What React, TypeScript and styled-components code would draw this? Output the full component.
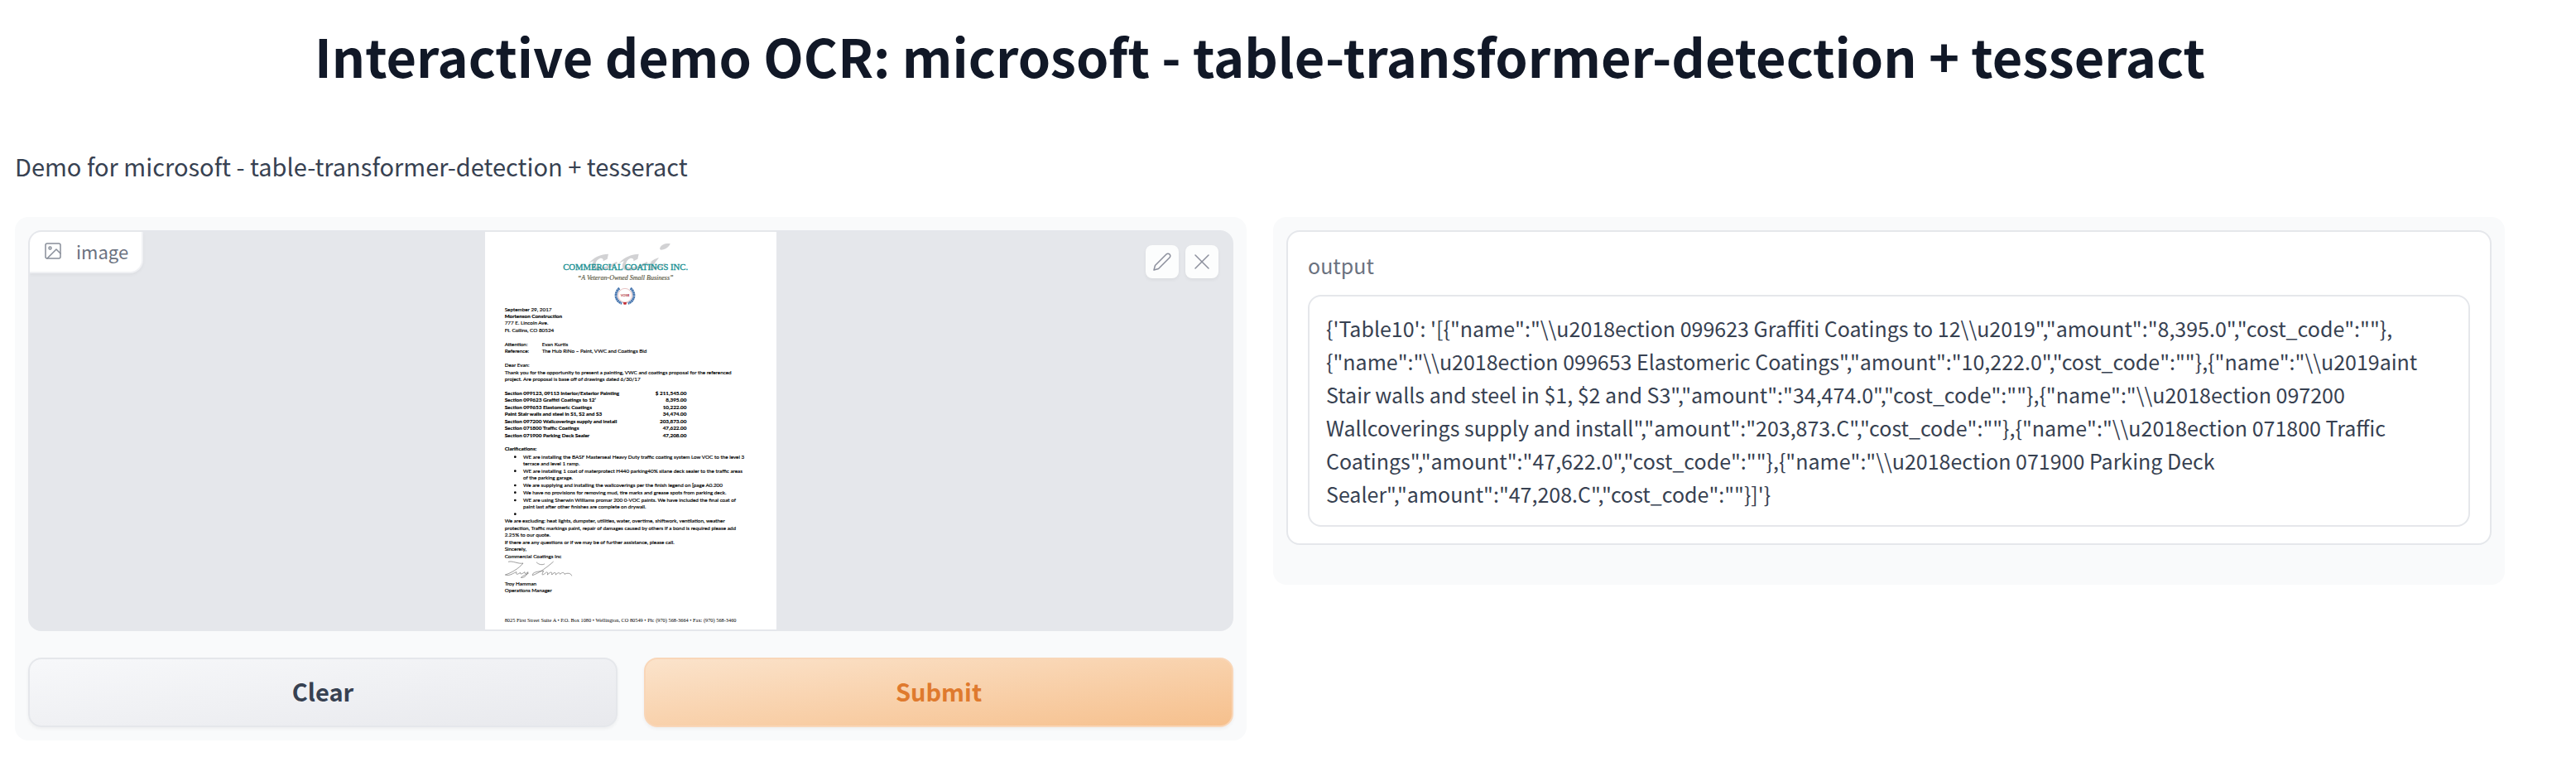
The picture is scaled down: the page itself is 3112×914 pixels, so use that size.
import React from "react";
import styled, { createGlobalStyle } from "styled-components";

const GlobalStyle = createGlobalStyle`
  *, *::before, *::after { box-sizing: border-box; }
  body {
    margin: 0;
    background: #ffffff;
    color: #374151;
    font-family: "Source Sans Pro", "Noto Sans CJK SC", sans-serif;
    font-size: 29px;
    line-height: 48px;
  }
`;

const Page = styled.main`
  padding: 24px 86px 20px 18px;
`;

const Title = styled.h1`
  margin: 0 0 66px;
  color: #111827;
  font-size: 63px;
  font-weight: 600;
  line-height: 86px;
  text-align: center;
`;

const Description = styled.p`
  margin: 0 0 38px;
`;

const Columns = styled.div`
  display: grid;
  grid-template-columns: 1fr 1fr;
  align-items: start;
  gap: 32px;
`;

const Panel = styled.section<{ $bottom: number }>`
  display: flex;
  flex-direction: column;
  gap: 32px;
  padding: 16px 16px ${(p) => p.$bottom}px;
  border-radius: 16px;
  background: #f9fafb;
`;

const ImageBlock = styled.div`
  position: relative;
  display: flex;
  justify-content: center;
  overflow: hidden;
  border: 2px solid #e5e7eb;
  border-radius: 16px;
  background: #e5e7eb;
`;

const ImageLabel = styled.div`
  position: absolute;
  top: 0;
  left: 0;
  display: flex;
  align-items: center;
  gap: 16px;
  height: 50px;
  padding: 0 16px 2px 16px;
  border: solid #f0f1f4;
  border-width: 0 2px 2px 0;
  border-radius: 0 0 16px 0;
  background: #ffffff;
  box-shadow: 0 2px 4px rgba(0, 0, 0, 0.04);
  color: #6b7280;
  font-size: 22px;
  line-height: 32px;

  svg { opacity: 0.8; }
`;

const Tools = styled.div`
  position: absolute;
  top: 16px;
  right: 16px;
  display: flex;
  gap: 8px;
`;

const ToolButton = styled.button`
  display: flex;
  align-items: center;
  justify-content: center;
  width: 40px;
  height: 40px;
  padding: 0;
  border: 0;
  border-radius: 8px;
  background: #fcfdfd;
  box-shadow: 0 2px 4px rgba(0, 0, 0, 0.05);
  color: #8b8f9c;
`;

const Actions = styled.div`
  display: grid;
  grid-template-columns: 1fr 1fr;
  gap: 32px;
`;

const ActionButton = styled.button<{ $primary?: boolean }>`
  height: 84px;
  padding: 0 32px 4px;
  border: 2px solid ${(p) => (p.$primary ? "#f9d6b8" : "#e5e7eb")};
  border-radius: 16px;
  background: ${(p) =>
    p.$primary
      ? "linear-gradient(to bottom right, #fbe3cb, #f6c08d)"
      : "linear-gradient(to bottom right, #f7f8fa, #e8e9ed)"};
  box-shadow: 0 2px 4px rgba(0, 0, 0, 0.05);
  color: ${(p) => (p.$primary ? "#df7a2e" : "#374151")};
  font-family: inherit;
  font-size: 29px;
  font-weight: 600;
  line-height: 48px;
`;

const OutputBlock = styled.div`
  display: flex;
  flex-direction: column;
  gap: 16px;
  padding: 20px 24px;
  border: 2px solid #e5e7eb;
  border-radius: 16px;
  background: #ffffff;
  font-size: 25px;
  line-height: 40px;
`;

const OutputLabel = styled.label`
  color: #6b7280;
`;

const OutputText = styled.textarea`
  display: block;
  width: 100%;
  padding: 18px 20px;
  border: 2px solid #e5e7eb;
  border-radius: 16px;
  outline: none;
  resize: none;
  overflow: hidden;
  background: #ffffff;
  color: #374151;
  font: inherit;
`;

const Document = styled.svg`
  display: block;
  width: 352px;
  height: 480px;
  background: #ffffff;
  font-family: Lato, sans-serif;
  font-size: 19px;
  fill: #000000;
  white-space: pre;
`;

const OUTPUT = [
  `{'Table10': '[{"name":"\\\\u2018ection 099623 Graffiti Coatings to 12\\\\u2019","amount":"8,395.0","cost_code":""},`,
  `{"name":"\\\\u2018ection 099653 Elastomeric Coatings","amount":"10,222.0","cost_code":""},{"name":"\\\\u2019aint`,
  `Stair walls and steel in $1, $2 and S3","amount":"34,474.0","cost_code":""},{"name":"\\\\u2018ection 097200`,
  `Wallcoverings supply and install","amount":"203,873.C","cost_code":""},{"name":"\\\\u2018ection 071800 Traffic`,
  `Coatings","amount":"47,622.0","cost_code":""},{"name":"\\\\u2018ection 071900 Parking Deck`,
  `Sealer","amount":"47,208.C","cost_code":""}]'}`,
].join("\n");

type Line = { x: number; y: number; text: string };

const LETTER: Line[] = [
  { x: 71, y: 287, text: "September 29, 2017" },
  { x: 71, y: 337, text: "777 E. Lincoln Ave." },
  { x: 71, y: 363, text: "Ft. Collins, CO 80524" },
  { x: 71, y: 413, text: "Attention:" },
  { x: 206, y: 413, text: "Evan Kurtis" },
  { x: 71, y: 439, text: "Reference:" },
  { x: 206, y: 439, text: "The Hub RiNo – Paint, VWC and Coatings Bid" },
  { x: 71, y: 489, text: "Dear Evan:" },
  { x: 71, y: 515, text: "Thank you for the opportunity to present a painting, VWC and coatings proposal for the referenced" },
  { x: 71, y: 540, text: "project.  Are proposal is base off of drawings dated 6/30/17" },
  { x: 138, y: 821, text: "WE are installing the BASF Masterseal Heavy Duty traffic coating system Low VOC to the level 3" },
  { x: 138, y: 846, text: "terrace and level 1 ramp." },
  { x: 138, y: 872, text: "WE are installing 1 coat of materprotect H440 parking40% silane deck sealer to the traffic areas" },
  { x: 138, y: 898, text: "of the parking garage." },
  { x: 138, y: 924, text: "We are supplying and installing the wallcoverings per the finish legend on [page A0.200" },
  { x: 138, y: 950, text: "We have no provisions for removing mud, tire marks and grease spots from parking deck." },
  { x: 138, y: 978, text: "WE are using Sherwin Williams promar 200 0-VOC paints.  We have included the final coat of" },
  { x: 138, y: 1003, text: "paint last after other finishes are complete on drywall." },
  { x: 71, y: 1054, text: "We are excluding: heat lights, dumpster, utilities, water, overtime, shiftwork, ventilation, weather" },
  { x: 71, y: 1080, text: "protection, Traffic markings paint, repair of damages caused by others If a bond is required please add" },
  { x: 71, y: 1105, text: "2.25% to our quote." },
  { x: 71, y: 1131, text: "If there are any questions or if we may be of further assistance, please call." },
  { x: 71, y: 1155, text: "Sincerely," },
  { x: 71, y: 1181, text: "Commercial Coatings Inc" },
  { x: 71, y: 1280, text: "Troy Hamman" },
  { x: 71, y: 1305, text: "Operations Manager" },
];

const BOLD: Line[] = [
  { x: 71, y: 312, text: "Mortenson Construction" },
  { x: 71, y: 591, text: "Section 099123, 09113 Interior/Exterior Painting" },
  { x: 71, y: 616, text: "Section 099623 Graffiti Coatings to 12’" },
  { x: 71, y: 642, text: "Section 099653 Elastomeric Coatings" },
  { x: 71, y: 667, text: "Paint Stair walls and steel in S1, S2 and S3" },
  { x: 71, y: 692, text: "Section 097200 Wallcoverings supply and install" },
  { x: 71, y: 718, text: "Section 071800 Traffic Coatings" },
  { x: 71, y: 743, text: "Section 071900 Parking Deck Sealer" },
  { x: 71, y: 793, text: "Clarifications:" },
];

const AMOUNTS: Line[] = [
  { x: 730, y: 591, text: "$  211,545.00" },
  { x: 730, y: 616, text: "8,395.00" },
  { x: 730, y: 642, text: "10,222.00" },
  { x: 730, y: 667, text: "34,474.00" },
  { x: 730, y: 692, text: "203,873.00" },
  { x: 730, y: 718, text: "47,622.00" },
  { x: 730, y: 743, text: "47,208.00" },
];

const BULLETS = [815, 866, 918, 944, 972, 1022];

const Lines = ({ lines }: { lines: Line[] }) => (
  <>
    {lines.map((l) => (
      <text key={l.y + l.text} x={l.x} y={l.y}>{l.text}</text>
    ))}
  </>
);

const SWASH =
  "M372 117 C392 92 420 80 447 80 L443 98 L428 106 C430 98 424 94 416 96 C402 102 396 118 404 126 C420 134 450 124 476 108 L480 112 C460 132 420 146 396 138 C384 132 386 116 394 106 C386 108 378 112 372 117 Z";

const Letter = () => (
  <Document viewBox="0 0 1056 1440" role="img" aria-label="Proposal letter">
    <g fill="#d2d2d4">
      <path d={SWASH} />
      <path d={SWASH} transform="translate(110 0)" />
      <path d="M582 122 C600 106 618 96 630 94 C618 110 604 124 612 128 C622 128 640 120 652 112 L654 116 C636 132 604 142 594 134 C590 124 600 112 606 106 C598 110 590 116 582 122 Z" />
      <path d="M633 60 C638 46 650 41 671 42 C668 54 654 64 636 65 Z" />
    </g>
    <text x="509" y="137" textAnchor="middle" fill="#168f92" stroke="#168f92" fontFamily="'Liberation Serif', serif" fontSize="32">
      COMMERCIAL COATINGS INC.
    </text>
    <text x="509" y="174" textAnchor="middle" fill="#5d5a45" stroke="#5d5a45" strokeWidth="0.5" fontFamily="'Liberation Serif', serif" fontSize="24" fontStyle="italic">
      “A Veteran-Owned Small Business”
    </text>
    <circle cx="507" cy="230" r="25" fill="none" stroke="#d9a3a3" strokeWidth="2" />
    <g fill="none" stroke="#4a78b0" strokeWidth="9" strokeDasharray="7 1">
      <path d="M487 204 C468 220 470 250 496 259" />
      <path d="M527 204 C546 220 544 250 518 259" />
    </g>
    <text x="507" y="235" textAnchor="middle" fill="#b02a35" fontSize="12" fontWeight="700">VOSB</text>
    <path d="M500 255 L514 255 L511 263 L503 263 Z" fill="#c03038" />
    <g stroke="#000000" strokeWidth="0.5">
      <Lines lines={LETTER} />
      <g fontWeight="700">
        <Lines lines={BOLD} />
      </g>
      <g fontWeight="700" textAnchor="end">
        <Lines lines={AMOUNTS} />
      </g>
    </g>
    {BULLETS.map((y) => (
      <circle key={y} cx="109" cy={y} r="4" />
    ))}
    <g fill="none" stroke="#6d6d6d" strokeWidth="2">
      <path d="M84 1195 C100 1190 120 1204 138 1200 C124 1218 94 1236 73 1242 C90 1248 104 1234 114 1232 C110 1246 122 1238 128 1234 C126 1244 138 1236 144 1232 C142 1240 148 1238 156 1232 C150 1248 138 1254 130 1252 C136 1246 150 1240 158 1236" />
      <path d="M186 1196 C196 1208 212 1206 216 1202 M248 1194 C228 1212 196 1236 172 1244 C170 1232 192 1230 212 1228 C206 1240 204 1244 214 1240 C222 1230 230 1230 226 1242 C238 1230 244 1230 242 1242 C250 1232 258 1232 256 1242 C264 1234 270 1232 272 1240 C280 1232 286 1232 288 1240 C298 1234 312 1236 314 1246" />
    </g>
    <text x="71" y="1412" fontFamily="'Liberation Serif', serif" fontSize="19">
      8025 First Street Suite A • P.O. Box 1080 • Wellington, CO 80549 • Ph: (970) 568-3664 • Fax: (970) 568-3460
    </text>
  </Document>
);

const Icon = ({ children }: { children: React.ReactNode }) => (
  <svg
    width="24"
    height="24"
    viewBox="0 0 24 24"
    fill="none"
    stroke="currentColor"
    strokeWidth="1.5"
    strokeLinecap="round"
    strokeLinejoin="round"
    aria-hidden="true"
  >
    {children}
  </svg>
);

export default function App() {
  return (
    <>
      <GlobalStyle />
      <Page>
        <Title>Interactive demo OCR: microsoft - table-transformer-detection + tesseract</Title>
        <Description>Demo for microsoft - table-transformer-detection + tesseract</Description>
        <Columns>
          <Panel $bottom={16}>
            <ImageBlock>
              <Letter />
              <ImageLabel>
                <Icon>
                  <rect x="3" y="3" width="18" height="18" rx="2" />
                  <circle cx="8.5" cy="8.5" r="1.5" />
                  <polyline points="21 15 16 10 5 21" />
                </Icon>
                image
              </ImageLabel>
              <Tools>
                <ToolButton type="button" aria-label="Edit">
                  <Icon>
                    <path d="M17 3a2.828 2.828 0 1 1 4 4L7.5 20.5 2 22l1.5-5.5L17 3z" />
                  </Icon>
                </ToolButton>
                <ToolButton type="button" aria-label="Clear image">
                  <Icon>
                    <path d="M4 4 L20 20 M20 4 L4 20" />
                  </Icon>
                </ToolButton>
              </Tools>
            </ImageBlock>
            <Actions>
              <ActionButton type="button">Clear</ActionButton>
              <ActionButton type="button" $primary>Submit</ActionButton>
            </Actions>
          </Panel>
          <Panel $bottom={48}>
            <OutputBlock>
              <OutputLabel htmlFor="output">output</OutputLabel>
              <OutputText id="output" rows={6} readOnly value={OUTPUT} />
            </OutputBlock>
          </Panel>
        </Columns>
      </Page>
    </>
  );
}
